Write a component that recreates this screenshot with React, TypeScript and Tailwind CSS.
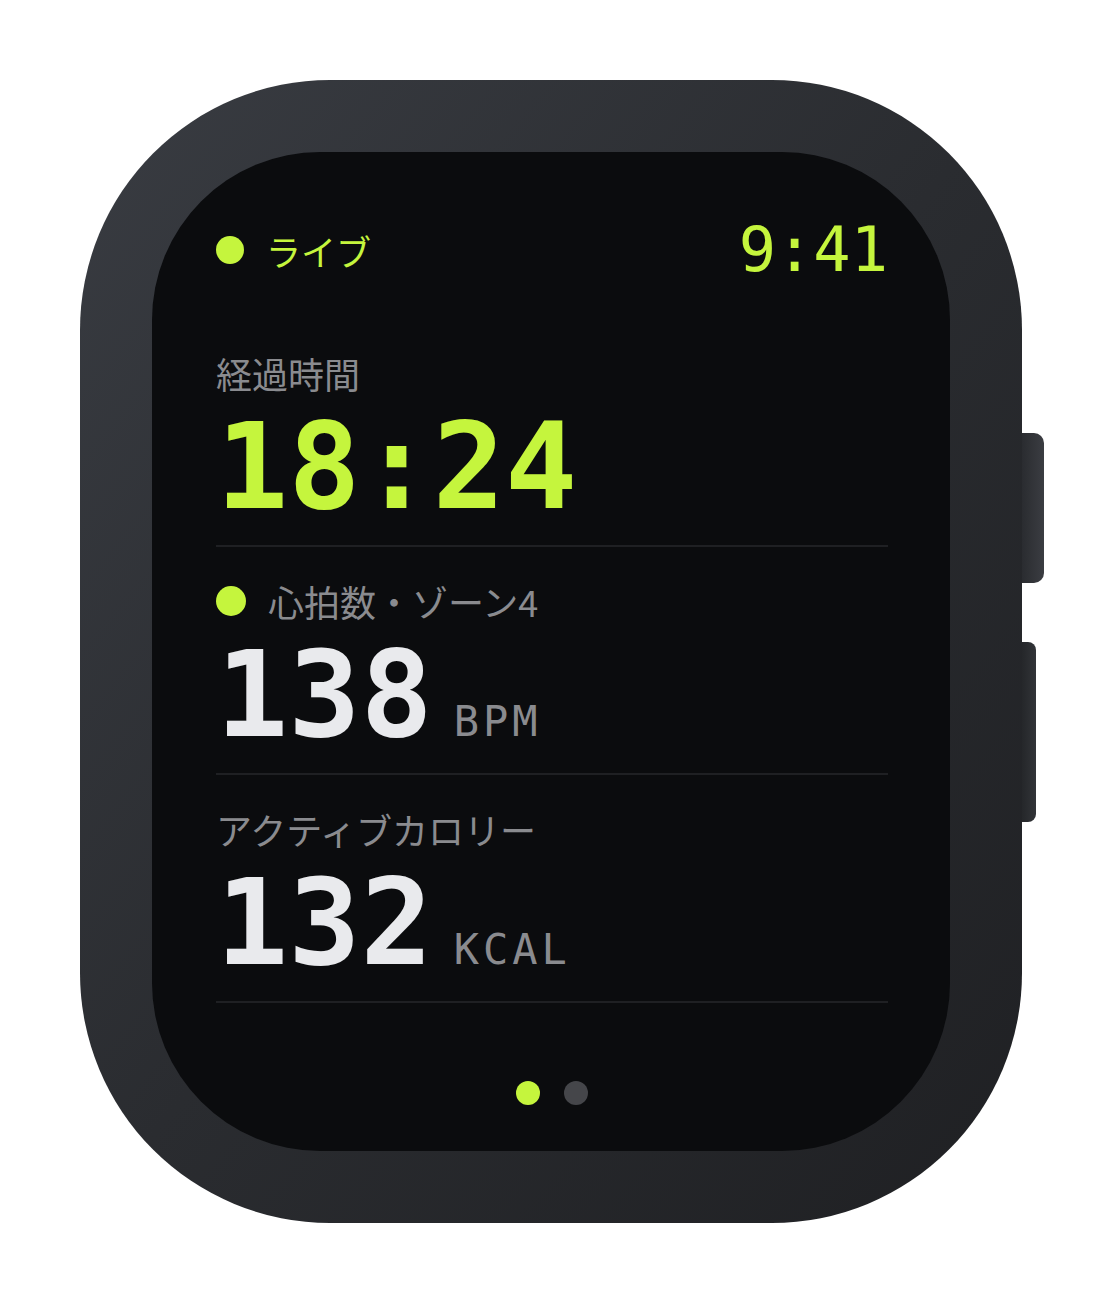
import React from 'react';

const jp = "font-['Noto_Sans_CJK_JP','Noto_Sans',sans-serif]";
const mono = "font-['DejaVu_Sans_Mono','Liberation_Mono',monospace]";

function Metric({
  label,
  value,
  unit,
  accent,
  dot,
}: {
  label: string;
  value: string;
  unit?: string;
  accent?: boolean;
  dot?: boolean;
}) {
  return (
    <div className="border-b-2 border-[#1f2023] pb-[28px]">
      <div className="flex h-[36px] items-center gap-[22px]">
        {dot && <span className="h-[30px] w-[30px] rounded-full bg-[#c5f53d]" />}
        <span className={`${jp} text-[36px] leading-none text-[#8a8b8f]`}>{label}</span>
      </div>
      <div className="mt-[26px] flex h-[100px] items-baseline">
        <span
          className={`${mono} text-[120px] font-bold leading-[100px] ${
            accent ? 'text-[#c5f53d]' : 'text-[#e9eaed]'
          }`}
        >
          {value}
        </span>
        {unit && (
          <span className={`${mono} ml-[21px] text-[42px] leading-none tracking-[4px] text-[#8a8b8f]`}>
            {unit}
          </span>
        )}
      </div>
    </div>
  );
}

export default function App() {
  return (
    <div className="flex h-[1304px] w-[1104px] items-start bg-white pl-[80px] pt-[80px]">
      <div className="relative">
        {/* case */}
        <div className="h-[1143px] w-[942px] rounded-[250px] bg-gradient-to-br from-[#393c42] via-[#2a2c30] to-[#1f2023] p-[72px]">
          {/* screen */}
          <div className="flex h-full w-full flex-col rounded-[168px] bg-[#0b0c0e] pl-[64px] pr-[62px] pt-[70px]">
            <div className="flex h-[56px] items-center justify-between">
              <div className="flex items-center gap-[22px]">
                <span className="h-[28px] w-[28px] rounded-full bg-[#c5f53d]" />
                <span className={`${jp} text-[35px] leading-none text-[#c5f53d]`}>ライブ</span>
              </div>
              <span className={`${mono} text-[62px] leading-[56px] text-[#c5f53d]`}>9:41</span>
            </div>

            <div className="mt-[77px] flex flex-col gap-[36px]">
              <Metric label="経過時間" value="18:24" accent />
              <Metric label="心拍数・ゾーン4" value="138" unit="BPM" dot />
              <Metric label="アクティブカロリー" value="132" unit="KCAL" />
            </div>

            <div className="mt-auto mb-[46px] flex justify-center gap-[24px]">
              <span className="h-[24px] w-[24px] rounded-full bg-[#c5f53d]" />
              <span className="h-[24px] w-[24px] rounded-full bg-[#45464a]" />
            </div>
          </div>
        </div>

        {/* side buttons */}
        <div className="absolute left-[942px] top-[353px] h-[150px] w-[22px] rounded-r-[10px] bg-gradient-to-r from-[#2a2c30] to-[#3b3d42]" />
        <div className="absolute left-[942px] top-[562px] h-[180px] w-[14px] rounded-r-[8px] bg-gradient-to-r from-[#25272a] to-[#323438]" />
      </div>
    </div>
  );
}
